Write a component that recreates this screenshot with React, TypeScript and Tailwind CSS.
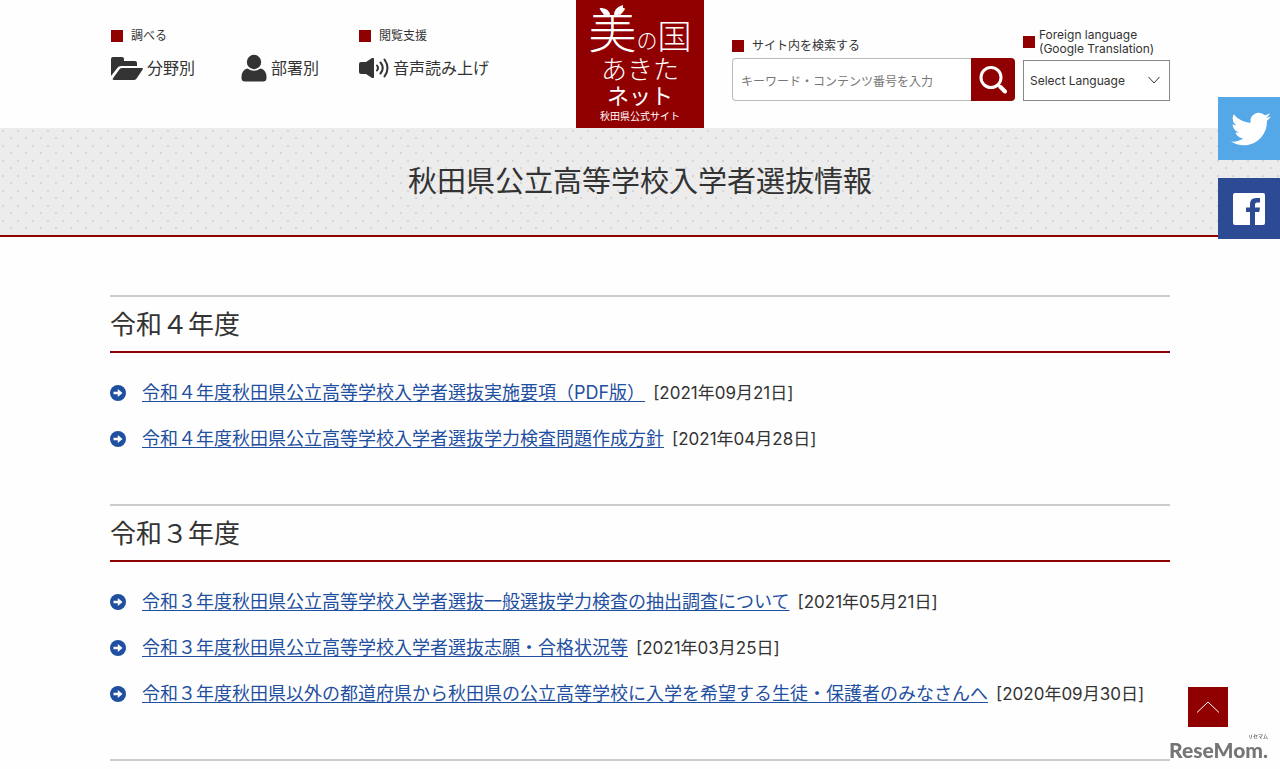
import React from 'react';
import { FaTwitter } from 'react-icons/fa';

const sections = [
  {
    title: '令和４年度',
    items: [
      { title: '令和４年度秋田県公立高等学校入学者選抜実施要項（PDF版）', date: '2021年09月21日' },
      { title: '令和４年度秋田県公立高等学校入学者選抜学力検査問題作成方針', date: '2021年04月28日' },
    ],
  },
  {
    title: '令和３年度',
    items: [
      { title: '令和３年度秋田県公立高等学校入学者選抜一般選抜学力検査の抽出調査について', date: '2021年05月21日' },
      { title: '令和３年度秋田県公立高等学校入学者選抜志願・合格状況等', date: '2021年03月25日' },
      { title: '令和３年度秋田県以外の都道府県から秋田県の公立高等学校に入学を希望する生徒・保護者のみなさんへ', date: '2020年09月30日' },
    ],
  },
];

const FolderIcon = () => (
  <svg className="w-8 h-6" viewBox="0 0 32 24" fill="currentColor" aria-hidden="true">
    <path d="M0 20V3Q0 1 2 1h9q2 0 2 2v2h11q2 0 2 2v3H10Q7.500 10 6.300 12z" />
    <path d="M11 12H31q1.500 0 .600 1.500L26 22q-1 2-3 2H3q-2 0-1-1.800L8 14q1-2 3-2z" />
  </svg>
);

const PersonIcon = () => (
  <svg className="w-[26px] h-7" viewBox="0 0 26 28" fill="currentColor" aria-hidden="true">
    <circle cx="13" cy="8" r="7.200" />
    <path d="M6.500 14.500Q13 19 19.500 14.500Q25.500 16 25.500 23v1q0 3.500-3.500 3.500H4Q.500 27.500.500 24v-1Q.500 16 6.500 14.500z" />
  </svg>
);

const SpeakerIcon = () => (
  <svg className="w-[30px] h-5" viewBox="0 0 30 20" aria-hidden="true">
    <path d="M2 4h5l6-4q2-.500 2 1v18q0 1.500-2 1l-6-4H2q-2 0-2-2V6q0-2 2-2z" fill="currentColor" />
    <path d="M18 7.500q2 2.500 0 5M21.500 4.500q4.500 5.500 0 11M25.500 1.500q6 8.500 0 17" fill="none" stroke="currentColor" strokeWidth="2" strokeLinecap="round" />
  </svg>
);

const SearchIcon = () => (
  <svg className="w-7 h-7" viewBox="0 0 28 28" fill="none" stroke="currentColor" aria-hidden="true">
    <circle cx="12" cy="11.500" r="10" strokeWidth="3" />
    <path d="M19 18.500l2.500 2.500" strokeWidth="3" />
    <path d="M21.500 21l4.500 4.500" strokeWidth="4" strokeLinecap="round" />
  </svg>
);

const ArrowBullet = () => (
  <svg className="w-4 h-4 shrink-0" viewBox="0 0 16 16" aria-hidden="true">
    <circle cx="8" cy="8" r="8" fill="#1f4fa0" />
    <path d="M3.500 6.700h4.300V4l4.700 4-4.700 4V9.300H3.500z" fill="#fff" />
  </svg>
);

const FacebookIcon = () => (
  <svg className="w-8 h-8" viewBox="0 0 32 32" aria-hidden="true">
    <rect width="32" height="32" rx="2" fill="#fff" />
    <path d="M17 32V19h-4v-4.500h4V11q0-6 6-6h4v4.500h-3q-2 0-2 2v3h5l-.700 4.500H22v13z" fill="#2d4b94" />
  </svg>
);

const Label: React.FC<{ children: React.ReactNode }> = ({ children }) => (
  <span className="flex items-center text-xs leading-4">
    <span className="w-3 h-3 mr-2 bg-[#900000] shrink-0"></span>
    {children}
  </span>
);

const SiteLogo = () => (
  <a href="#" className="relative w-32 h-32 bg-[#900000] text-white flex flex-col items-center">
    <svg className="absolute left-5 top-1 w-8 h-3" viewBox="0 0 32 12" fill="currentColor" aria-hidden="true">
      <path d="M14 12Q14 4 4 4q1 6 10 8z" />
      <path d="M18 12Q17 4 27 1q1 9-9 11z" />
    </svg>
    <span className="flex items-end h-[57px] font-light">
      <span className="text-5xl leading-[52px]">美</span>
      <span className="text-[21px] leading-8">の</span>
      <span className="text-[34px] leading-10">国</span>
    </span>
    <span className="text-[26px] leading-[26px] font-light">あきた</span>
    <span className="text-[22px] leading-[26px]">ネット</span>
    <span className="text-[10px] leading-[14px]">秋田県公式サイト</span>
  </a>
);

const Header = () => (
  <header className="max-w-[1060px] mx-auto grid grid-cols-[1fr_128px_1fr] min-h-32">
    <div className="flex pt-7 pl-px gap-10">
      <div>
        <Label>調べる</Label>
        <div className="flex mt-2 gap-[46px]">
          <a href="#" className="flex items-center gap-1 h-8"><FolderIcon />分野別</a>
          <a href="#" className="flex items-center gap-1 h-8"><PersonIcon />部署別</a>
        </div>
      </div>
      <div>
        <Label>閲覧支援</Label>
        <a href="#" className="flex items-center gap-1 h-8 mt-2"><SpeakerIcon />音声読み上げ</a>
      </div>
    </div>
    <SiteLogo />
    <div className="flex pl-7 gap-2 items-start">
      <form className="flex-1 min-w-0 pt-[38px]" onSubmit={e => e.preventDefault()}>
        <label htmlFor="keyword"><Label>サイト内を検索する</Label></label>
        <div className="flex h-[43px] mt-1">
          <input
            id="keyword"
            type="text"
            placeholder="キーワード・コンテンツ番号を入力"
            className="flex-1 min-w-0 px-2 pt-1 text-xs bg-white border border-r-0 border-[#bbb] rounded-l placeholder:text-[#777]"
          />
          <button type="submit" aria-label="検索" className="w-11 bg-[#900000] text-white rounded-r flex items-center justify-center">
            <SearchIcon />
          </button>
        </div>
      </form>
      <div className="w-[147px] pt-7">
        <label htmlFor="language" className="flex items-center text-xs leading-[14px]">
          <span className="w-3 h-3 mr-1 bg-[#900000] shrink-0"></span>
          <span className="whitespace-nowrap">Foreign language<br />(Google Translation)</span>
        </label>
        <div className="relative mt-1">
          <select id="language" className="w-full h-[41px] px-[6px] text-xs appearance-none bg-white border border-[#888]">
            <option>Select Language</option>
          </select>
          <svg className="absolute right-[10px] top-4 w-3 h-2 pointer-events-none" viewBox="0 0 12 8" fill="none" stroke="#333" aria-hidden="true">
            <path d="M.500 1L6 7l5.500-6" />
          </svg>
        </div>
      </div>
    </div>
  </header>
);

const App: React.FC = () => {
  return (
    <div className="relative bg-[#fefefe] text-[#333] text-base font-['Inter','Noto_Sans_CJK_JP',sans-serif]">
      <Header />

      <div className="flex items-center justify-center h-[109px] border-b-2 border-[#900000] bg-[#ececec] bg-[radial-gradient(circle_at_3px_3px,#d6d6d6_1px,transparent_1px),radial-gradient(circle_at_11px_10px,#d6d6d6_1px,transparent_1px)] bg-[length:15px_15px]">
        <h1 className="text-[29px] leading-10">秋田県公立高等学校入学者選抜情報</h1>
      </div>

      <main className="max-w-[1060px] mx-auto pt-[58px] pb-2">
        {sections.map(section => (
          <section key={section.title} className="pb-[42px]">
            <h2 className="h-[58px] pt-[2px] flex items-center border-t-2 border-t-[#ccc] border-b-2 border-b-[#900000] text-[26px] leading-10">{section.title}</h2>
            <ul className="pt-[17px]">
              {section.items.map(item => (
                <li key={item.title} className="flex items-center h-[46px] text-lg whitespace-nowrap">
                  <ArrowBullet />
                  <a href="#" className="ml-4 text-[#1f4fa0] underline underline-offset-2 decoration-1">{item.title}</a>
                  <span className="ml-2 text-[17px]">[{item.date}]</span>
                </li>
              ))}
            </ul>
          </section>
        ))}
        <hr className="border-t-2 border-[#ccc]" />
      </main>

      <div className="fixed right-0 top-[97px] flex flex-col gap-[18px]">
        <a href="#" aria-label="Twitter" className="w-[62px] h-[63px] bg-[#55a8e8] text-white flex items-center justify-center">
          <FaTwitter className="w-10 h-10 ml-1" />
        </a>
        <a href="#" aria-label="Facebook" className="w-[62px] h-[61px] bg-[#2d4b94] flex items-center justify-center">
          <FacebookIcon />
        </a>
      </div>

      <button
        type="button"
        aria-label="ページの先頭へ"
        onClick={() => window.scrollTo(0, 0)}
        className="fixed right-[52px] bottom-[42px] w-10 h-10 bg-[#900000] flex items-center justify-center"
      >
        <svg className="w-6 h-3" viewBox="0 0 24 12" fill="none" stroke="#fff" aria-hidden="true">
          <path d="M1 11.500L12 1l11 10.500" />
        </svg>
      </button>

      <div className="fixed right-3 bottom-2 flex flex-col items-end text-[#757575]">
        <span className="text-[5px] leading-[6px] font-bold">リセマム</span>
        <span className="text-[21px] leading-[22px] font-black font-['Lato',sans-serif]">ReseMom.</span>
      </div>
    </div>
  );
};

export default App;
